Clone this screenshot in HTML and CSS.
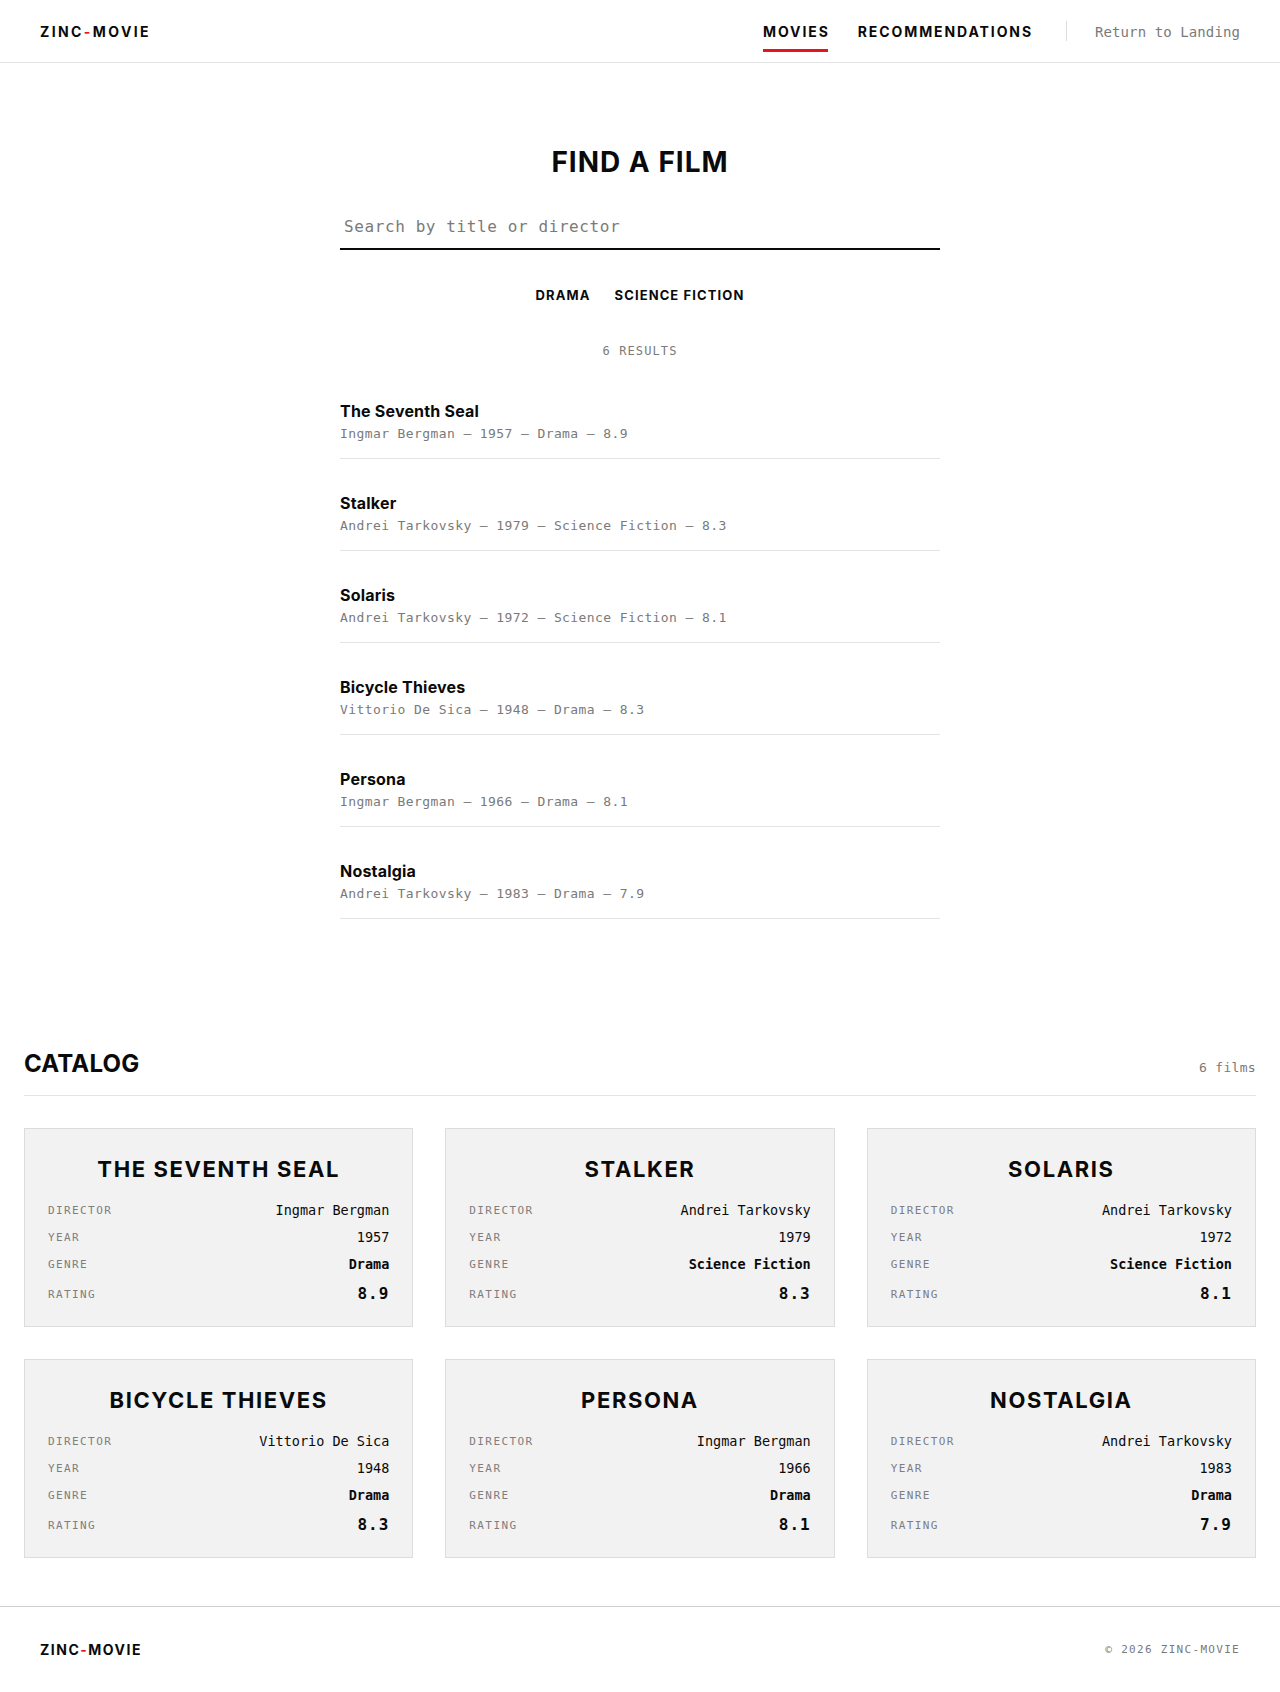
FILE: index.html
```html
<!DOCTYPE html>
<html lang="en">
<head>
<meta charset="utf-8">
<title>ZINC-MOVIE</title>
<link rel="stylesheet" href="styles.css">
</head>
<body>
<header class="site-header">
  <a class="logo" href="#">ZINC<span class="dash">-</span>MOVIE</a>
  <nav class="main-nav">
    <a class="nav-link active" href="#">MOVIES</a>
    <a class="nav-link" href="#">RECOMMENDATIONS</a>
    <span class="nav-divider"></span>
    <a class="nav-return" href="#">Return to Landing</a>
  </nav>
</header>

<main>
  <section class="finder">
    <h1 class="finder-title">FIND A FILM</h1>
    <div class="search-wrap">
      <input class="search-input" type="text" placeholder="Search by title or director">
    </div>
    <div class="filters">
      <button class="filter">DRAMA</button>
      <button class="filter">SCIENCE FICTION</button>
    </div>
    <p class="results-count">6 RESULTS</p>
    <ul class="results">
      <li class="result"><div class="result-title">The Seventh Seal</div><div class="result-meta">Ingmar Bergman — 1957 — Drama — 8.9</div></li>
      <li class="result"><div class="result-title">Stalker</div><div class="result-meta">Andrei Tarkovsky — 1979 — Science Fiction — 8.3</div></li>
      <li class="result"><div class="result-title">Solaris</div><div class="result-meta">Andrei Tarkovsky — 1972 — Science Fiction — 8.1</div></li>
      <li class="result"><div class="result-title">Bicycle Thieves</div><div class="result-meta">Vittorio De Sica — 1948 — Drama — 8.3</div></li>
      <li class="result"><div class="result-title">Persona</div><div class="result-meta">Ingmar Bergman — 1966 — Drama — 8.1</div></li>
      <li class="result"><div class="result-title">Nostalgia</div><div class="result-meta">Andrei Tarkovsky — 1983 — Drama — 7.9</div></li>
    </ul>
  </section>

  <section class="catalog">
    <div class="catalog-head">
      <h2 class="catalog-title">CATALOG</h2>
      <span class="catalog-count">6 films</span>
    </div>
    <div class="card-grid">
      <article class="card">
        <h3 class="card-title">THE SEVENTH SEAL</h3>
        <dl class="card-rows">
          <div class="row"><dt>DIRECTOR</dt><dd>Ingmar Bergman</dd></div>
          <div class="row"><dt>YEAR</dt><dd>1957</dd></div>
          <div class="row"><dt>GENRE</dt><dd class="strong">Drama</dd></div>
          <div class="row row-rating"><dt>RATING</dt><dd class="rating">8.9</dd></div>
        </dl>
      </article>
      <article class="card">
        <h3 class="card-title">STALKER</h3>
        <dl class="card-rows">
          <div class="row"><dt>DIRECTOR</dt><dd>Andrei Tarkovsky</dd></div>
          <div class="row"><dt>YEAR</dt><dd>1979</dd></div>
          <div class="row"><dt>GENRE</dt><dd class="strong">Science Fiction</dd></div>
          <div class="row row-rating"><dt>RATING</dt><dd class="rating">8.3</dd></div>
        </dl>
      </article>
      <article class="card">
        <h3 class="card-title">SOLARIS</h3>
        <dl class="card-rows">
          <div class="row"><dt>DIRECTOR</dt><dd>Andrei Tarkovsky</dd></div>
          <div class="row"><dt>YEAR</dt><dd>1972</dd></div>
          <div class="row"><dt>GENRE</dt><dd class="strong">Science Fiction</dd></div>
          <div class="row row-rating"><dt>RATING</dt><dd class="rating">8.1</dd></div>
        </dl>
      </article>
      <article class="card">
        <h3 class="card-title">BICYCLE THIEVES</h3>
        <dl class="card-rows">
          <div class="row"><dt>DIRECTOR</dt><dd>Vittorio De Sica</dd></div>
          <div class="row"><dt>YEAR</dt><dd>1948</dd></div>
          <div class="row"><dt>GENRE</dt><dd class="strong">Drama</dd></div>
          <div class="row row-rating"><dt>RATING</dt><dd class="rating">8.3</dd></div>
        </dl>
      </article>
      <article class="card">
        <h3 class="card-title">PERSONA</h3>
        <dl class="card-rows">
          <div class="row"><dt>DIRECTOR</dt><dd>Ingmar Bergman</dd></div>
          <div class="row"><dt>YEAR</dt><dd>1966</dd></div>
          <div class="row"><dt>GENRE</dt><dd class="strong">Drama</dd></div>
          <div class="row row-rating"><dt>RATING</dt><dd class="rating">8.1</dd></div>
        </dl>
      </article>
      <article class="card">
        <h3 class="card-title">NOSTALGIA</h3>
        <dl class="card-rows">
          <div class="row"><dt>DIRECTOR</dt><dd>Andrei Tarkovsky</dd></div>
          <div class="row"><dt>YEAR</dt><dd>1983</dd></div>
          <div class="row"><dt>GENRE</dt><dd class="strong">Drama</dd></div>
          <div class="row row-rating"><dt>RATING</dt><dd class="rating">7.9</dd></div>
        </dl>
      </article>
    </div>
  </section>
</main>

<footer class="site-footer">
  <span class="footer-logo">ZINC<span class="dash">-</span>MOVIE</span>
  <span class="footer-copy">© 2026 ZINC-MOVIE</span>
</footer>
</body>
</html>
```

FILE: styles.css
```css
* { box-sizing: border-box; }

html, body {
  margin: 0;
  padding: 0;
  background: #ffffff;
  color: #0a0a0a;
  font-family: Inter, "Liberation Sans", sans-serif;
}

a { color: inherit; text-decoration: none; }

/* Header */
.site-header {
  height: 63px;
  display: flex;
  align-items: center;
  justify-content: space-between;
  padding: 0 40px;
  border-bottom: 1px solid #e4e4e4;
}

.logo {
  font-weight: 700;
  font-size: 14px;
  letter-spacing: 2.4px;
}

.dash { color: #e8141b; }

.main-nav {
  display: flex;
  align-items: center;
  height: 100%;
}

.nav-link {
  position: relative;
  font-weight: 700;
  font-size: 14px;
  letter-spacing: 1.9px;
  margin-right: 28px;
  line-height: 20px;
  padding-top: 1px;
}

.nav-link.active::after {
  content: "";
  position: absolute;
  left: 0;
  right: 2px;
  bottom: -10px;
  height: 3px;
  background: #e8141b;
}

.nav-divider {
  width: 1px;
  height: 20px;
  background: #dddddd;
  margin-left: 5px;
  margin-right: 28px;
}

.nav-return {
  font-family: "DejaVu Sans Mono", "Liberation Mono", monospace;
  font-size: 14px;
  color: #7a7a7a;
  letter-spacing: 0.1px;
  padding-top: 1px;
}

/* Finder */
.finder {
  width: 600px;
  margin: 0 auto;
  padding: 82px 0 80px;
  display: flex;
  flex-direction: column;
  align-items: stretch;
}

.finder-title {
  margin: 0;
  text-align: center;
  font-size: 28px;
  line-height: 34px;
  font-weight: 700;
  letter-spacing: 1px;
}

.search-wrap {
  margin-top: 27px;
}

.search-input {
  width: 100%;
  border: 0;
  border-bottom: 2px solid #0a0a0a;
  padding: 11px 4px 12px;
  font-family: "DejaVu Sans Mono", "Liberation Mono", monospace;
  font-size: 16px;
  letter-spacing: 0.6px;
  outline: none;
  background: transparent;
  color: #0a0a0a;
}

.search-input::placeholder { color: #7a7a7a; }

.filters {
  display: flex;
  justify-content: center;
  gap: 24px;
  margin-top: 36px;
}

.filter {
  border: 0;
  background: none;
  padding: 0;
  font-family: Inter, "Liberation Sans", sans-serif;
  font-weight: 700;
  font-size: 13px;
  line-height: 18px;
  letter-spacing: 1.1px;
  color: #0a0a0a;
}

.results-count {
  margin: 39px 0 0;
  text-align: center;
  font-family: "DejaVu Sans Mono", "Liberation Mono", monospace;
  font-size: 12px;
  line-height: 16px;
  letter-spacing: 1.1px;
  color: #7a7a7a;
}

.results {
  list-style: none;
  margin: 8px 0 0;
  padding: 0;
}

.result {
  padding: 34px 0 14px;
  border-bottom: 1px solid #e4e4e4;
}

.result-title {
  font-weight: 700;
  font-size: 16px;
  line-height: 20px;
  letter-spacing: 0.2px;
}

.result-meta {
  margin-top: 3px;
  font-family: "DejaVu Sans Mono", "Liberation Mono", monospace;
  font-size: 13px;
  line-height: 20px;
  letter-spacing: 0.4px;
  color: #7a7a7a;
}

/* Catalog */
.catalog {
  padding: 50px 24px 0;
}

.catalog-head {
  display: flex;
  justify-content: space-between;
  align-items: baseline;
  padding-bottom: 16px;
  border-bottom: 1px solid #e4e4e4;
}

.catalog-title {
  margin: 0;
  font-size: 24px;
  line-height: 30px;
  font-weight: 700;
  letter-spacing: 0.2px;
}

.catalog-count {
  font-family: "DejaVu Sans Mono", "Liberation Mono", monospace;
  font-size: 13px;
  letter-spacing: 0.3px;
  color: #7a7a7a;
}

.card-grid {
  margin-top: 32px;
  display: grid;
  grid-template-columns: repeat(3, 1fr);
  gap: 32px;
}

.card {
  background: #f2f2f2;
  border: 1px solid #dcdcdc;
  padding: 23px 23px 18px;
}

.card-title {
  margin: 0 0 10px;
  text-align: center;
  font-size: 22px;
  line-height: 34px;
  font-weight: 700;
  letter-spacing: 1.6px;
}

.card-rows { margin: 0; }

.row {
  display: flex;
  justify-content: space-between;
  align-items: center;
  height: 27px;
}

.row.row-rating {
  height: 29px;
  margin-top: 2px;
}

.row dt {
  font-family: "DejaVu Sans Mono", "Liberation Mono", monospace;
  font-size: 11px;
  letter-spacing: 1.4px;
  color: #7e7e7e;
  padding-top: 1px;
}

.row dd {
  margin: 0;
  font-family: "DejaVu Sans Mono", "Liberation Mono", monospace;
  font-size: 13.5px;
  color: #0a0a0a;
}

.row dd.strong { font-weight: 700; }

.row dd.rating {
  font-weight: 700;
  font-size: 16px;
  letter-spacing: 1px;
}

/* Footer */
.site-footer {
  margin-top: 48px;
  border-top: 1px solid #cfcfcf;
  height: 86px;
  display: flex;
  align-items: center;
  justify-content: space-between;
  padding: 0 40px;
}

.footer-logo {
  font-weight: 700;
  font-size: 14px;
  letter-spacing: 1.5px;
}

.footer-copy {
  font-family: "DejaVu Sans Mono", "Liberation Mono", monospace;
  font-size: 11px;
  letter-spacing: 1.3px;
  color: #7a7a7a;
}
```
